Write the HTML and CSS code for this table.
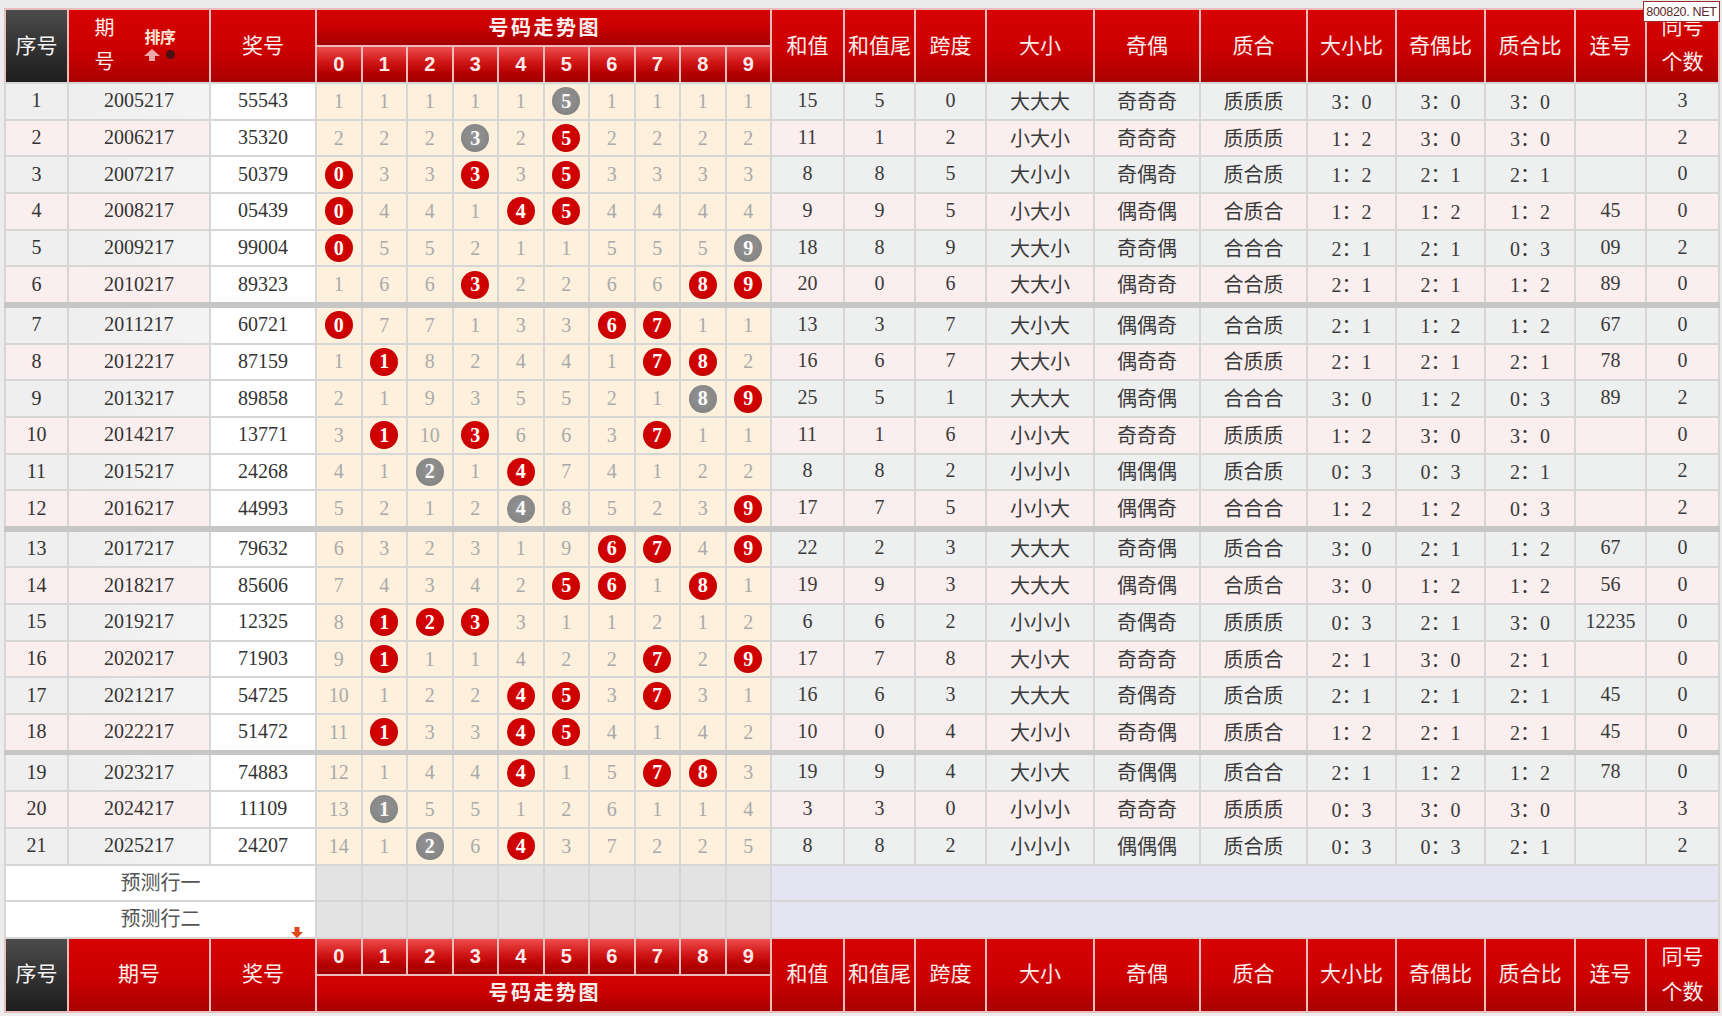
FILE: index.html
```html
<!DOCTYPE html>
<html lang="zh-CN">
<head>
<meta charset="utf-8">
<title>号码走势图</title>
<link rel="stylesheet" href="styles.css">
</head>
<body>
<div class="wm">800820. NET</div>
<div class="sheet">
  <div class="head">
    <div class="hc hc-no">序号</div>
    <div class="hc hc-qh">
      <span class="qh-t">期<br>号</span>
      <span class="sort">
        <b class="sort-t">排序</b>
        <span class="sort-i">
          <svg width="16" height="12" viewBox="0 0 16 12"><path d="M8 0 L16 7 H11 V12 H5 V7 H0 Z" fill="#f2a6a6"/></svg>
          <svg width="9" height="9" viewBox="0 0 9 9"><circle cx="4.5" cy="4.5" r="4.5" fill="#4a1212"/></svg>
        </span>
      </span>
    </div>
    <div class="hc">奖号</div>
    <div class="trend">
      <div class="tt">号码走势图</div>
      <div class="td">0</div><div class="td">1</div><div class="td">2</div><div class="td">3</div><div class="td">4</div><div class="td">5</div><div class="td">6</div><div class="td">7</div><div class="td">8</div><div class="td">9</div>
    </div>
    <div class="hc">和值</div><div class="hc">和值尾</div><div class="hc">跨度</div><div class="hc">大小</div><div class="hc">奇偶</div><div class="hc">质合</div><div class="hc">大小比</div><div class="hc">奇偶比</div><div class="hc">质合比</div><div class="hc">连号</div><div class="hc hc-2l">同号<br>个数</div>
  </div>

  <div class="body">
    <div class="grp">
      <div class="row o"><div>1</div><div>2005217</div><div>55543</div><div>1</div><div>1</div><div>1</div><div>1</div><div>1</div><div><b class="ball g">5</b></div><div>1</div><div>1</div><div>1</div><div>1</div><div>15</div><div>5</div><div>0</div><div>大大大</div><div>奇奇奇</div><div>质质质</div><div>3：0</div><div>3：0</div><div>3：0</div><div></div><div>3</div></div>
      <div class="row e"><div>2</div><div>2006217</div><div>35320</div><div>2</div><div>2</div><div>2</div><div><b class="ball g">3</b></div><div>2</div><div><b class="ball">5</b></div><div>2</div><div>2</div><div>2</div><div>2</div><div>11</div><div>1</div><div>2</div><div>小大小</div><div>奇奇奇</div><div>质质质</div><div>1：2</div><div>3：0</div><div>3：0</div><div></div><div>2</div></div>
      <div class="row o"><div>3</div><div>2007217</div><div>50379</div><div><b class="ball">0</b></div><div>3</div><div>3</div><div><b class="ball">3</b></div><div>3</div><div><b class="ball">5</b></div><div>3</div><div>3</div><div>3</div><div>3</div><div>8</div><div>8</div><div>5</div><div>大小小</div><div>奇偶奇</div><div>质合质</div><div>1：2</div><div>2：1</div><div>2：1</div><div></div><div>0</div></div>
      <div class="row e"><div>4</div><div>2008217</div><div>05439</div><div><b class="ball">0</b></div><div>4</div><div>4</div><div>1</div><div><b class="ball">4</b></div><div><b class="ball">5</b></div><div>4</div><div>4</div><div>4</div><div>4</div><div>9</div><div>9</div><div>5</div><div>小大小</div><div>偶奇偶</div><div>合质合</div><div>1：2</div><div>1：2</div><div>1：2</div><div>45</div><div>0</div></div>
      <div class="row o"><div>5</div><div>2009217</div><div>99004</div><div><b class="ball">0</b></div><div>5</div><div>5</div><div>2</div><div>1</div><div>1</div><div>5</div><div>5</div><div>5</div><div><b class="ball g">9</b></div><div>18</div><div>8</div><div>9</div><div>大大小</div><div>奇奇偶</div><div>合合合</div><div>2：1</div><div>2：1</div><div>0：3</div><div>09</div><div>2</div></div>
      <div class="row e"><div>6</div><div>2010217</div><div>89323</div><div>1</div><div>6</div><div>6</div><div><b class="ball">3</b></div><div>2</div><div>2</div><div>6</div><div>6</div><div><b class="ball">8</b></div><div><b class="ball">9</b></div><div>20</div><div>0</div><div>6</div><div>大大小</div><div>偶奇奇</div><div>合合质</div><div>2：1</div><div>2：1</div><div>1：2</div><div>89</div><div>0</div></div>
    </div>
    <div class="sep"></div>
    <div class="grp">
      <div class="row o"><div>7</div><div>2011217</div><div>60721</div><div><b class="ball">0</b></div><div>7</div><div>7</div><div>1</div><div>3</div><div>3</div><div><b class="ball">6</b></div><div><b class="ball">7</b></div><div>1</div><div>1</div><div>13</div><div>3</div><div>7</div><div>大小大</div><div>偶偶奇</div><div>合合质</div><div>2：1</div><div>1：2</div><div>1：2</div><div>67</div><div>0</div></div>
      <div class="row e"><div>8</div><div>2012217</div><div>87159</div><div>1</div><div><b class="ball">1</b></div><div>8</div><div>2</div><div>4</div><div>4</div><div>1</div><div><b class="ball">7</b></div><div><b class="ball">8</b></div><div>2</div><div>16</div><div>6</div><div>7</div><div>大大小</div><div>偶奇奇</div><div>合质质</div><div>2：1</div><div>2：1</div><div>2：1</div><div>78</div><div>0</div></div>
      <div class="row o"><div>9</div><div>2013217</div><div>89858</div><div>2</div><div>1</div><div>9</div><div>3</div><div>5</div><div>5</div><div>2</div><div>1</div><div><b class="ball g">8</b></div><div><b class="ball">9</b></div><div>25</div><div>5</div><div>1</div><div>大大大</div><div>偶奇偶</div><div>合合合</div><div>3：0</div><div>1：2</div><div>0：3</div><div>89</div><div>2</div></div>
      <div class="row e"><div>10</div><div>2014217</div><div>13771</div><div>3</div><div><b class="ball">1</b></div><div>10</div><div><b class="ball">3</b></div><div>6</div><div>6</div><div>3</div><div><b class="ball">7</b></div><div>1</div><div>1</div><div>11</div><div>1</div><div>6</div><div>小小大</div><div>奇奇奇</div><div>质质质</div><div>1：2</div><div>3：0</div><div>3：0</div><div></div><div>0</div></div>
      <div class="row o"><div>11</div><div>2015217</div><div>24268</div><div>4</div><div>1</div><div><b class="ball g">2</b></div><div>1</div><div><b class="ball">4</b></div><div>7</div><div>4</div><div>1</div><div>2</div><div>2</div><div>8</div><div>8</div><div>2</div><div>小小小</div><div>偶偶偶</div><div>质合质</div><div>0：3</div><div>0：3</div><div>2：1</div><div></div><div>2</div></div>
      <div class="row e"><div>12</div><div>2016217</div><div>44993</div><div>5</div><div>2</div><div>1</div><div>2</div><div><b class="ball g">4</b></div><div>8</div><div>5</div><div>2</div><div>3</div><div><b class="ball">9</b></div><div>17</div><div>7</div><div>5</div><div>小小大</div><div>偶偶奇</div><div>合合合</div><div>1：2</div><div>1：2</div><div>0：3</div><div></div><div>2</div></div>
    </div>
    <div class="sep"></div>
    <div class="grp">
      <div class="row o"><div>13</div><div>2017217</div><div>79632</div><div>6</div><div>3</div><div>2</div><div>3</div><div>1</div><div>9</div><div><b class="ball">6</b></div><div><b class="ball">7</b></div><div>4</div><div><b class="ball">9</b></div><div>22</div><div>2</div><div>3</div><div>大大大</div><div>奇奇偶</div><div>质合合</div><div>3：0</div><div>2：1</div><div>1：2</div><div>67</div><div>0</div></div>
      <div class="row e"><div>14</div><div>2018217</div><div>85606</div><div>7</div><div>4</div><div>3</div><div>4</div><div>2</div><div><b class="ball">5</b></div><div><b class="ball">6</b></div><div>1</div><div><b class="ball">8</b></div><div>1</div><div>19</div><div>9</div><div>3</div><div>大大大</div><div>偶奇偶</div><div>合质合</div><div>3：0</div><div>1：2</div><div>1：2</div><div>56</div><div>0</div></div>
      <div class="row o"><div>15</div><div>2019217</div><div>12325</div><div>8</div><div><b class="ball">1</b></div><div><b class="ball">2</b></div><div><b class="ball">3</b></div><div>3</div><div>1</div><div>1</div><div>2</div><div>1</div><div>2</div><div>6</div><div>6</div><div>2</div><div>小小小</div><div>奇偶奇</div><div>质质质</div><div>0：3</div><div>2：1</div><div>3：0</div><div>12235</div><div>0</div></div>
      <div class="row e"><div>16</div><div>2020217</div><div>71903</div><div>9</div><div><b class="ball">1</b></div><div>1</div><div>1</div><div>4</div><div>2</div><div>2</div><div><b class="ball">7</b></div><div>2</div><div><b class="ball">9</b></div><div>17</div><div>7</div><div>8</div><div>大小大</div><div>奇奇奇</div><div>质质合</div><div>2：1</div><div>3：0</div><div>2：1</div><div></div><div>0</div></div>
      <div class="row o"><div>17</div><div>2021217</div><div>54725</div><div>10</div><div>1</div><div>2</div><div>2</div><div><b class="ball">4</b></div><div><b class="ball">5</b></div><div>3</div><div><b class="ball">7</b></div><div>3</div><div>1</div><div>16</div><div>6</div><div>3</div><div>大大大</div><div>奇偶奇</div><div>质合质</div><div>2：1</div><div>2：1</div><div>2：1</div><div>45</div><div>0</div></div>
      <div class="row e"><div>18</div><div>2022217</div><div>51472</div><div>11</div><div><b class="ball">1</b></div><div>3</div><div>3</div><div><b class="ball">4</b></div><div><b class="ball">5</b></div><div>4</div><div>1</div><div>4</div><div>2</div><div>10</div><div>0</div><div>4</div><div>大小小</div><div>奇奇偶</div><div>质质合</div><div>1：2</div><div>2：1</div><div>2：1</div><div>45</div><div>0</div></div>
    </div>
    <div class="sep"></div>
    <div class="grp">
      <div class="row o"><div>19</div><div>2023217</div><div>74883</div><div>12</div><div>1</div><div>4</div><div>4</div><div><b class="ball">4</b></div><div>1</div><div>5</div><div><b class="ball">7</b></div><div><b class="ball">8</b></div><div>3</div><div>19</div><div>9</div><div>4</div><div>大小大</div><div>奇偶偶</div><div>质合合</div><div>2：1</div><div>1：2</div><div>1：2</div><div>78</div><div>0</div></div>
      <div class="row e"><div>20</div><div>2024217</div><div>11109</div><div>13</div><div><b class="ball g">1</b></div><div>5</div><div>5</div><div>1</div><div>2</div><div>6</div><div>1</div><div>1</div><div>4</div><div>3</div><div>3</div><div>0</div><div>小小小</div><div>奇奇奇</div><div>质质质</div><div>0：3</div><div>3：0</div><div>3：0</div><div></div><div>3</div></div>
      <div class="row o"><div>21</div><div>2025217</div><div>24207</div><div>14</div><div>1</div><div><b class="ball g">2</b></div><div>6</div><div><b class="ball">4</b></div><div>3</div><div>7</div><div>2</div><div>2</div><div>5</div><div>8</div><div>8</div><div>2</div><div>小小小</div><div>偶偶偶</div><div>质合质</div><div>0：3</div><div>0：3</div><div>2：1</div><div></div><div>2</div></div>
    </div>
  </div>

  <div class="pred">
    <div class="prow">
      <div class="p-left">预测行一</div>
      <div class="p-d"></div><div class="p-d"></div><div class="p-d"></div><div class="p-d"></div><div class="p-d"></div><div class="p-d"></div><div class="p-d"></div><div class="p-d"></div><div class="p-d"></div><div class="p-d"></div>
      <div class="p-right"></div>
    </div>
    <div class="prow">
      <div class="p-left">预测行二
        <svg class="down" width="12" height="11" viewBox="0 0 12 11"><path d="M3.5 0 H8.5 V5 H12 L6 11 L0 5 H3.5 Z" fill="#e2481a"/></svg>
      </div>
      <div class="p-d"></div><div class="p-d"></div><div class="p-d"></div><div class="p-d"></div><div class="p-d"></div><div class="p-d"></div><div class="p-d"></div><div class="p-d"></div><div class="p-d"></div><div class="p-d"></div>
      <div class="p-right"></div>
    </div>
  </div>

  <div class="head foot">
    <div class="hc hc-no">序号</div>
    <div class="hc">期号</div>
    <div class="hc">奖号</div>
    <div class="trend trend-foot">
      <div class="td">0</div><div class="td">1</div><div class="td">2</div><div class="td">3</div><div class="td">4</div><div class="td">5</div><div class="td">6</div><div class="td">7</div><div class="td">8</div><div class="td">9</div>
      <div class="tt">号码走势图</div>
    </div>
    <div class="hc">和值</div><div class="hc">和值尾</div><div class="hc">跨度</div><div class="hc">大小</div><div class="hc">奇偶</div><div class="hc">质合</div><div class="hc">大小比</div><div class="hc">奇偶比</div><div class="hc">质合比</div><div class="hc">连号</div><div class="hc hc-2l hc-2lf">同号<br>个数</div>
  </div>
</div>
</body>
</html>
```

FILE: styles.css
```css
:root {
  --cols: 61px 140px 104px repeat(10, 43.5px) 71px 69px 69px 106px 104px 105px 87px 87px 88px 69px 71px;
  --cjk: "Noto Sans CJK SC", sans-serif;
}

body {
  margin: 0;
  background: #ececec;
  font-family: "Liberation Serif", "Noto Sans CJK SC", serif;
  position: relative;
}

.sheet {
  width: 1716px;
  margin: 8px 0 0 4px;
}

/* ---------- header / footer ---------- */
.head {
  display: grid;
  grid-template-columns: 61px 140px 104px 453px 71px 69px 69px 106px 104px 105px 87px 87px 88px 69px 71px;
  grid-template-rows: 72px;
  column-gap: 2px;
  padding: 2px 2px 0;
  background: #ecbcbc;
}

.foot {
  padding: 0 2px 2px;
}

.hc {
  display: flex;
  align-items: center;
  justify-content: center;
  text-align: center;
  color: #fdeeee;
  font-family: var(--cjk);
  font-size: 21px;
  padding-bottom: 5px;
  box-sizing: border-box;
  background: linear-gradient(#d60303 0%, #cc0000 55%, #a90000 100%);
}

.hc-no {
  background: linear-gradient(#4c4c4c 0%, #2e2e2e 60%, #1e1e1e 100%);
  color: #f4f4f4;
}

.hc-2l {
  line-height: 35px;
  padding-bottom: 6px;
}

.hc-2lf {
  line-height: 35px;
  padding-bottom: 3px;
}

.hc-qh {
  gap: 30px;
  padding-right: 8px;
  padding-bottom: 4px;
}

.qh-t {
  line-height: 34px;
  font-size: 20px;
}

.sort {
  display: flex;
  flex-direction: column;
  align-items: flex-start;
  gap: 4px;
}

.sort-t {
  font-size: 16px;
  line-height: 17px;
  font-weight: 700;
  color: #ffe6d6;
  letter-spacing: -0.5px;
}

.sort-i {
  display: flex;
  align-items: center;
  gap: 6px;
}

.sort-i svg {
  display: block;
}

.trend {
  display: grid;
  grid-template-columns: repeat(10, 43.5px);
  grid-template-rows: 35px 35px;
  gap: 2px;
}

.tt {
  grid-column: 1 / -1;
  display: flex;
  align-items: center;
  justify-content: center;
  font-family: var(--cjk);
  font-size: 20px;
  font-weight: 700;
  letter-spacing: 2.5px;
  padding: 0 0 3px 2.5px;
  color: #fdeeee;
  background: linear-gradient(#d40303 0%, #c80000 50%, #a40000 100%);
}

.td {
  display: flex;
  align-items: center;
  justify-content: center;
  font-family: "Liberation Sans", sans-serif;
  font-weight: 700;
  font-size: 20px;
  color: #fde9e9;
  background: linear-gradient(#ee4c4c 0%, #cf1414 45%, #b40000 75%, #a20000 100%);
}

/* ---------- body ---------- */
.body {
  background: #d6d6d6;
  padding-top: 2px;
}

.grp {
  display: flex;
  flex-direction: column;
  gap: 2px;
  padding: 0 2px;
  background: #d6d6d6;
}

.sep {
  height: 5.7px;
  background: #c6c6c6;
}

.row {
  display: grid;
  grid-template-columns: var(--cols);
  column-gap: 2px;
  height: 34.7px;
}

.row > div {
  display: flex;
  align-items: center;
  justify-content: center;
  font-size: 20px;
  color: #333;
  padding-bottom: 1px;
  box-sizing: border-box;
}

.row > div:nth-child(3) {
  background: #fff;
}

.row > div:nth-child(n+4):nth-child(-n+13) {
  background: #fdf0dd;
  color: #aaa;
  padding-bottom: 0;
}

.row > div:nth-child(n+14) {
  color: #3a3a3a;
  padding-bottom: 2px;
}

.row.o > div:nth-child(1) {
  background: #efefef;
}

.row.o > div:nth-child(2) {
  background: linear-gradient(90deg, #eeeeee, #f4f4f4);
}

.row.o > div:nth-child(n+14) {
  background: #eef0f0;
}

.row.e > div:nth-child(1),
.row.e > div:nth-child(2),
.row.e > div:nth-child(n+14) {
  background: #fbeeee;
}

.ball {
  width: 28px;
  height: 28px;
  border-radius: 50%;
  display: flex;
  align-items: center;
  justify-content: center;
  font-weight: 700;
  font-size: 20px;
  color: #fff;
  background: radial-gradient(circle at 50% 45%, #d80000 0%, #cc0000 60%, #b00000 95%, #c43030 100%);
}

.ball.g {
  background: radial-gradient(circle at 50% 45%, #939393 0%, #888 60%, #787878 95%, #8e8e8e 100%);
}

/* ---------- predict rows ---------- */
.pred {
  display: flex;
  flex-direction: column;
  gap: 2px;
  padding: 2px;
  background: #d6d6d6;
}

.prow {
  display: grid;
  grid-template-columns: var(--cols);
  column-gap: 2px;
  height: 34.5px;
}

.p-left {
  grid-column: 1 / 4;
  position: relative;
  display: flex;
  align-items: center;
  justify-content: center;
  background: #fff;
  font-family: var(--cjk);
  font-size: 20px;
  color: #555;
  padding-bottom: 3px;
  box-sizing: border-box;
}

.p-d {
  background: #e3e3e3;
}

.p-right {
  grid-column: 14 / 25;
  background: #e4e4f3;
}

.down {
  position: absolute;
  right: 12px;
  bottom: -1px;
}

/* ---------- watermark ---------- */
.wm {
  position: absolute;
  top: 1px;
  left: 1643px;
  width: 77px;
  height: 21px;
  box-sizing: border-box;
  border: 1px solid #9c2b2b;
  background: #fff;
  display: flex;
  align-items: center;
  justify-content: center;
  white-space: nowrap;
  overflow: hidden;
  font-family: "Liberation Sans", sans-serif;
  font-size: 12.5px;
  letter-spacing: -0.3px;
  color: #5a2626;
  z-index: 2;
}
```
